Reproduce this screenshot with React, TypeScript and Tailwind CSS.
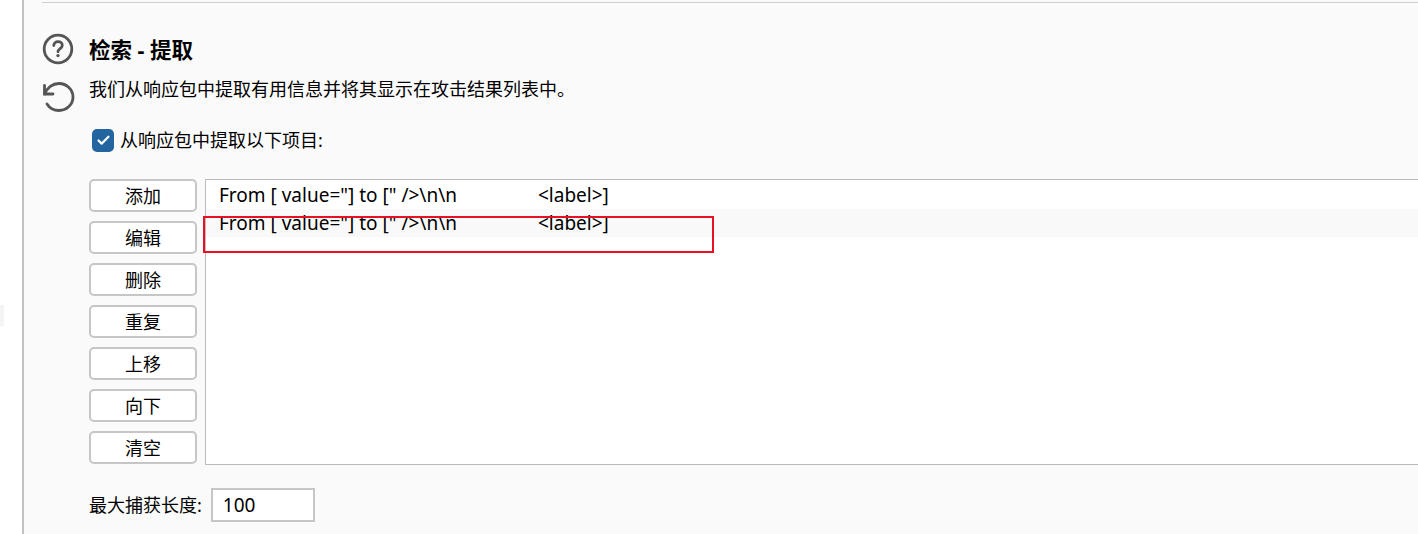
import { Check } from "lucide-react";

const buttons = ["添加", "编辑", "删除", "重复", "上移", "向下", "清空"];
const row = 'From [ value="] to [" />\\n\\n';

function Row({ shaded }: { shaded?: boolean }) {
  return (
    <div className={`h-[28px] pl-[13px] flex items-center whitespace-pre ${shaded ? "bg-[#f9f9f9]" : "bg-white"}`}>
      <span className="w-[319px]">{row}</span>
      <span>{"<label>]"}</span>
    </div>
  );
}

export default function App() {
  return (
    <main className="relative flex h-[534px] w-[1418px] overflow-hidden bg-white text-[19px] text-black font-['Noto_Sans','Noto_Sans_CJK_SC',sans-serif]">
      <div className="relative w-[22px] shrink-0 bg-white">
        <div className="absolute left-0 top-[305px] h-[21px] w-[4px] bg-[#f4f4f4]" />
      </div>
      <div className="flex-1 border-l-2 border-[#c4c1c1] bg-[#fafafa] pl-[18px]">
        <div className="mt-[2px] h-[1px] bg-[#d0cfcf]" />
        <div className="mt-[30px] flex">
          <div className="flex w-[30px] shrink-0 flex-col gap-[16px]">
            <svg width="32" height="32" viewBox="0 0 32 32" fill="none" stroke="#555" strokeWidth="2.8">
              <circle cx="16" cy="16" r="13.8" />
              <path d="M11.8 12.6c0-2.400 1.900-4 4.300-4s4.200 1.500 4.200 3.700c0 3.300-4.300 3.300-4.300 6.500" strokeLinecap="round" />
              <circle cx="16" cy="22.600" r="1.700" fill="#555" stroke="none" />
            </svg>
            <svg width="33" height="32" viewBox="0 0 33 32" fill="none" stroke="#555" strokeWidth="2.800" strokeLinecap="round">
              <path d="M2.500 4.500v8.500h8.500" />
              <path d="M2.800 13C5 6.800 10.500 2.500 17 2.500c7.700 0 14 6 14 13.500s-6.300 13.500-14 13.500c-5 0-9.500-2.500-12-6.500" />
            </svg>
          </div>
          <div className="ml-[17px] flex-1">
            <h1 className="text-[21.500px] font-bold leading-[34px]">检索 - 提取</h1>
            <p className="mt-[10px] text-[18px] leading-[24px]">我们从响应包中提取有用信息并将其显示在攻击结果列表中。</p>
            <label className="ml-[3px] mt-[27px] flex items-center gap-[6px] text-[18px] leading-[24px]">
              <span className="flex h-[23px] w-[22px] items-center justify-center rounded-[5px] bg-[#23659f]">
                <Check className="h-[15px] w-[15px] text-white" strokeWidth={3.500} />
              </span>
              从响应包中提取以下项目:
            </label>
            <div className="mt-[27px] flex gap-[8px]">
              <div className="flex w-[108px] shrink-0 flex-col gap-[9px]">
                {buttons.map((b) => (
                  <button key={b} className="h-[33px] rounded-[5px] border-2 border-[#c8c5c5] bg-white text-[18px] leading-none">
                    {b}
                  </button>
                ))}
              </div>
              <div className="h-[286px] flex-1 border border-r-0 border-[#bdbaba] bg-white pt-[1px]">
                <Row />
                <Row shaded />
              </div>
            </div>
            <div className="mt-[23px] flex items-center gap-[9px]">
              <span className="text-[18px]">最大捕获长度:</span>
              <div className="flex h-[34px] w-[104px] items-center border-2 border-[#c8c5c5] bg-white pl-[10px]">100</div>
            </div>
          </div>
        </div>
      </div>
      <div className="absolute left-[203px] top-[216px] h-[37px] w-[511px] border-2 border-[#e81123]" />
    </main>
  );
}
